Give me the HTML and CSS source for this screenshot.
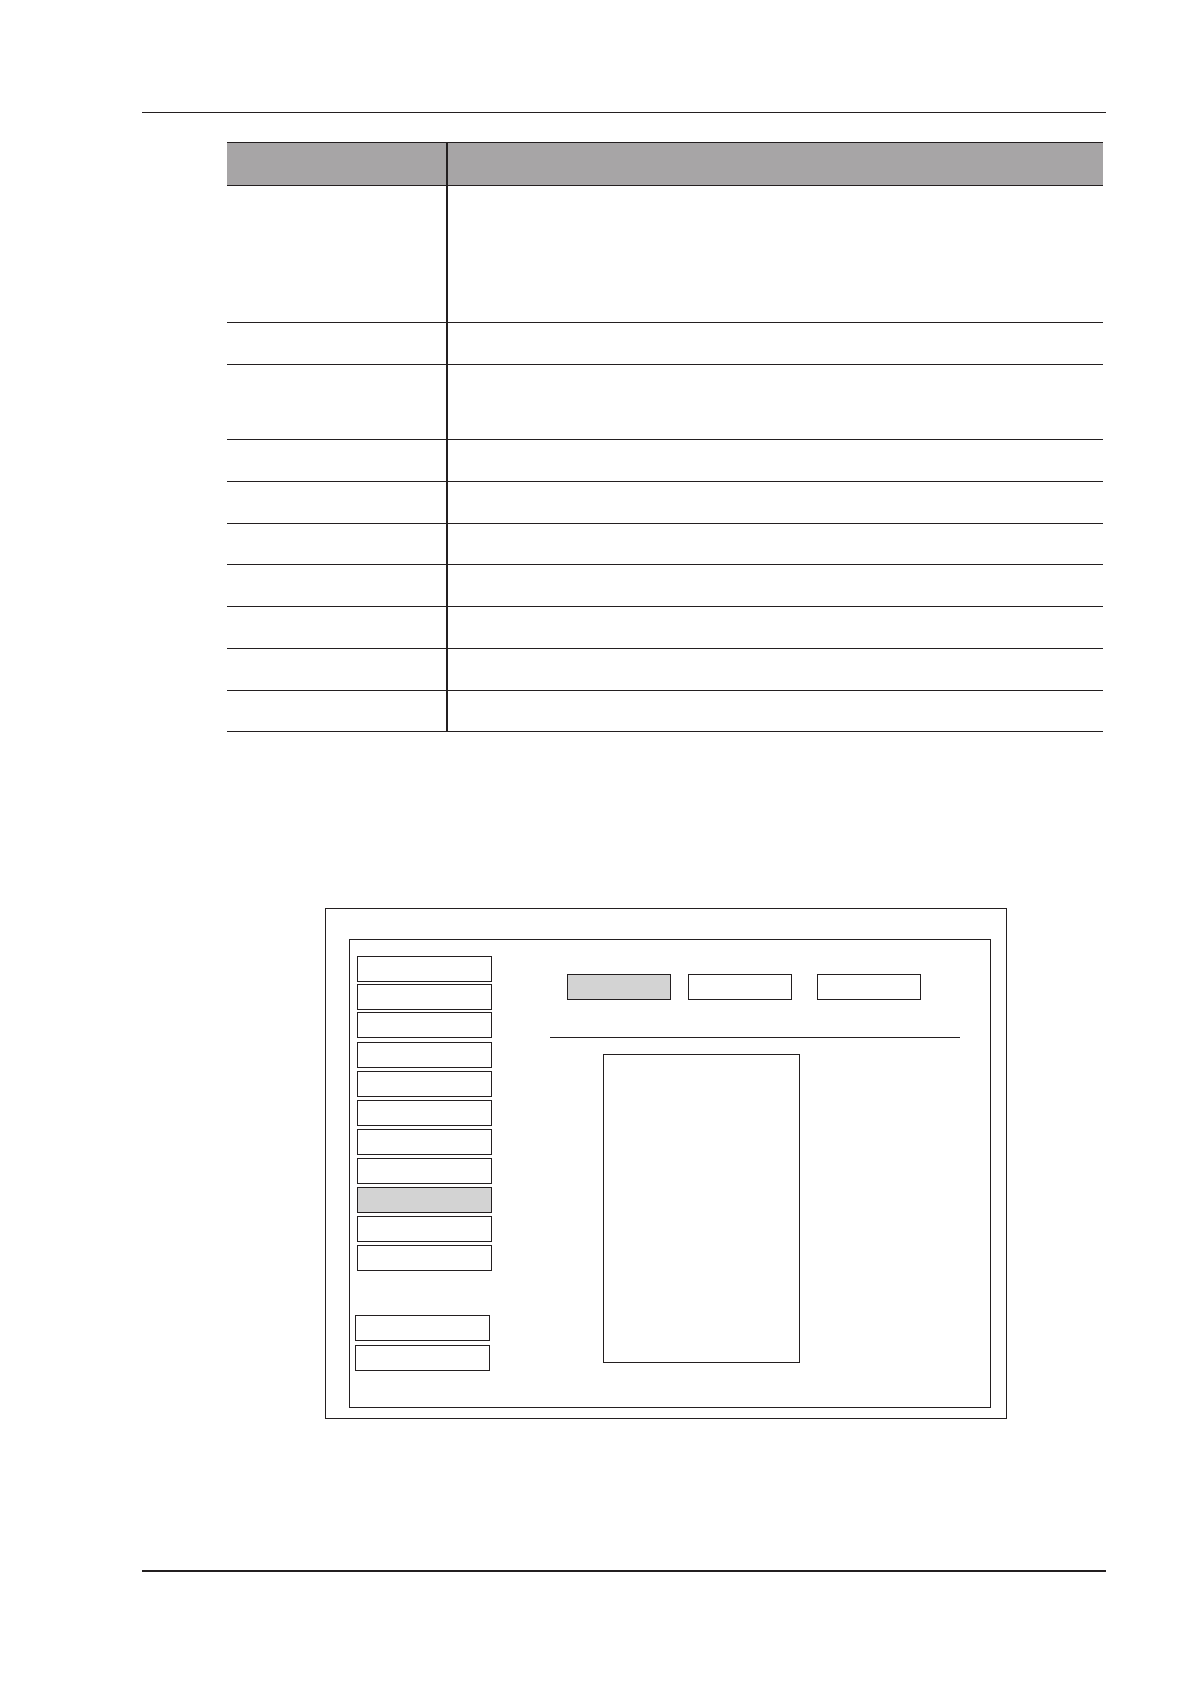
FILE: index.html
```html
<!DOCTYPE html>
<html lang="en">
<head>
    <meta charset="UTF-8">
    <meta name="viewport" content="width=device-width, initial-scale=1.0">
    <title>Settings</title>
    <link rel="stylesheet" href="styles.css">
</head>
<body>
    <div class="page">
        <hr class="rule">

        <table class="items">
            <thead>
                <tr><th></th><th></th></tr>
            </thead>
            <tbody>
                <tr class="row-large"><td></td><td></td></tr>
                <tr><td></td><td></td></tr>
                <tr class="row-medium"><td></td><td></td></tr>
                <tr><td></td><td></td></tr>
                <tr><td></td><td></td></tr>
                <tr class="row-small"><td></td><td></td></tr>
                <tr><td></td><td></td></tr>
                <tr><td></td><td></td></tr>
                <tr><td></td><td></td></tr>
                <tr class="row-small"><td></td><td></td></tr>
            </tbody>
        </table>

        <div class="screen">
            <div class="panel">
                <!-- side menu -->
                <nav class="menu">
                    <div class="menu-group menu-top">
                        <button class="btn" type="button"></button>
                        <button class="btn" type="button"></button>
                        <button class="btn" type="button"></button>
                    </div>
                    <div class="menu-group">
                        <button class="btn" type="button"></button>
                        <button class="btn" type="button"></button>
                        <button class="btn" type="button"></button>
                        <button class="btn" type="button"></button>
                        <button class="btn" type="button"></button>
                        <button class="btn active" type="button"></button>
                        <button class="btn" type="button"></button>
                        <button class="btn" type="button"></button>
                    </div>
                    <div class="menu-group menu-bottom">
                        <button class="btn" type="button"></button>
                        <button class="btn" type="button"></button>
                    </div>
                </nav>

                <main class="content">
                    <div class="tabs">
                        <button class="btn active" type="button"></button>
                        <button class="btn" type="button"></button>
                        <button class="btn tab-last" type="button"></button>
                    </div>
                    <hr class="rule">
                    <div class="preview"></div>
                </main>
            </div>
        </div>

        <hr class="rule rule-bottom">
    </div>
</body>
</html>
```
FILE: styles.css
```css
* {
    box-sizing: border-box;
}
body {
    font-family: "Liberation Sans", Arial, sans-serif;
    background-color: #fff;
    color: #231f20;
    margin: 0;
}
.page {
    padding: 112px 85px 112px 142px;
}
.rule {
    height: 1px;
    margin: 0;
    border: none;
    background-color: #231f20;
}
.rule-bottom {
    height: 2px;
}

/* table */
.items {
    width: calc(100% - 88px);
    margin: 29px 3px 176px 85px;
    table-layout: fixed;
    border-collapse: separate;
    border-spacing: 0;
}
th, td {
    height: 42px;
    padding: 0;
    border-bottom: 1px solid #231f20;
}
th {
    height: 44px;
    background-color: #a7a5a6;
    border-top: 1px solid #231f20;
}
th:first-child, td:first-child {
    width: 221px;
    border-right: 2px solid #231f20;
}
.row-large td {
    height: 137px;
}
.row-medium td {
    height: 75px;
}
.row-small td {
    height: 41px;
}

/* screen */
.screen {
    margin: 0 99px 151px 183px;
    padding: 30px 15px 10px 23px;
    border: 1px solid #231f20;
}
.panel {
    display: grid;
    grid-template-columns: 200px 1fr;
    border: 1px solid #231f20;
}
.btn {
    height: 26px;
    padding: 0;
    border: 1px solid #231f20;
    border-radius: 0;
    background-color: #fff;
    cursor: pointer;
}
.btn.active {
    background-color: #d3d3d3;
}
.menu {
    padding: 16px 0 36px 7px;
}
.menu-group {
    display: grid;
    grid-template-columns: 135px;
    gap: 3px;
}
.menu-top {
    gap: 2px;
    margin-bottom: 4px;
}
.menu-bottom {
    gap: 4px;
    margin: 44px 0 0 -2px;
}
.content {
    padding: 34px 30px 0 0;
}
.tabs {
    display: flex;
    gap: 17px;
    margin: 0 0 37px 17px;
}
.tabs .btn {
    width: 104px;
}
.tab-last {
    margin-left: 8px;
}
.preview {
    width: 197px;
    height: 309px;
    margin: 16px 0 0 53px;
    border: 1px solid #231f20;
}
```
